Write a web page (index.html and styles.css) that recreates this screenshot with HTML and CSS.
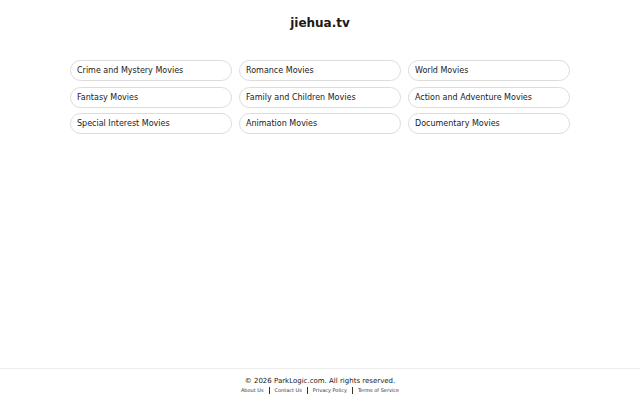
FILE: index.html
```html
<!DOCTYPE html>
<html>
<head>
<meta charset="utf-8">
<link rel="stylesheet" href="styles.css">
</head>
<body>
<div class="page">
  <main class="main">
    <h1 class="title">jiehua.tv</h1>
    <div class="grid">
      <a class="item">Crime and Mystery Movies</a>
      <a class="item">Romance Movies</a>
      <a class="item">World Movies</a>
      <a class="item">Fantasy Movies</a>
      <a class="item">Family and Children Movies</a>
      <a class="item">Action and Adventure Movies</a>
      <a class="item">Special Interest Movies</a>
      <a class="item">Animation Movies</a>
      <a class="item">Documentary Movies</a>
    </div>
  </main>
  <footer class="footer">
    <div class="copy">© 2026 ParkLogic.com. All rights reserved.</div>
    <div class="links">
      <a>About Us</a><span class="sep"></span><a>Contact Us</a><span class="sep"></span><a>Privacy Policy</a><span class="sep"></span><a>Terms of Service</a>
    </div>
  </footer>
</div>
</body>
</html>
```
FILE: styles.css
```css
html, body {
  margin: 0;
  padding: 0;
  background: #fff;
  font-family: "DejaVu Sans", sans-serif;
  color: #222;
}
.page {
  display: flex;
  flex-direction: column;
  height: 400px;
}
.main {
  flex: 1;
  display: flex;
  flex-direction: column;
  align-items: center;
}
.title {
  margin: 16px 0 0;
  font-size: 12px;
  line-height: 14px;
  font-weight: bold;
  color: #1a1a1a;
}
.grid {
  margin-top: 30px;
  width: 500px;
  display: grid;
  grid-template-columns: repeat(3, 1fr);
  column-gap: 7px;
  row-gap: 5.5px;
}
.item {
  display: block;
  border: 1px solid #dcdcdc;
  border-radius: 11px;
  padding: 4px 6px;
  font-size: 8px;
  line-height: 11px;
  color: #1a1a1a;
}
.footer {
  border-top: 1px solid #ececec;
  display: flex;
  flex-direction: column;
  align-items: center;
  padding-top: 7px;
  box-sizing: border-box;
  height: 32px;
}
.copy {
  font-size: 7px;
  line-height: 10px;
  color: #222;
}
.links {
  display: flex;
  align-items: center;
  font-size: 5px;
  line-height: 8px;
  color: #333;
}
.sep {
  display: inline-block;
  width: 1px;
  height: 7px;
  background: #333;
  margin: 0 5px;
}
```
